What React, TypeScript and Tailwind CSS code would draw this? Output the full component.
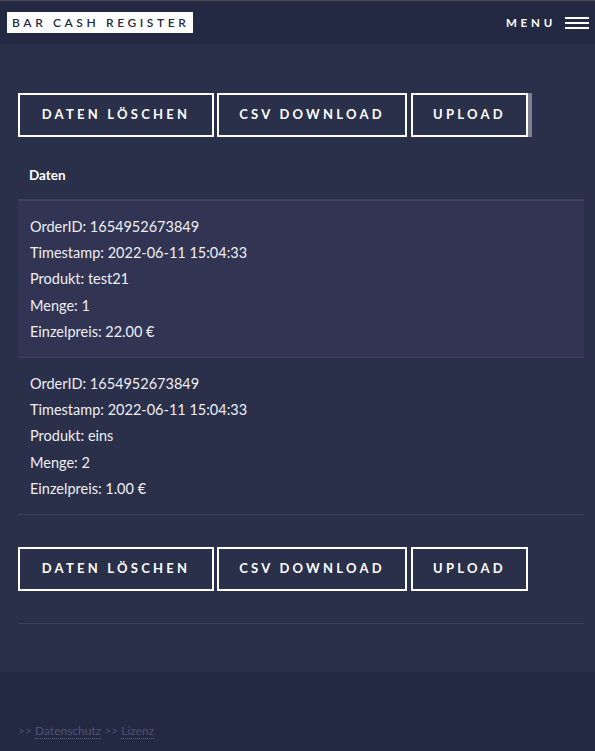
import React from "react";

const rows = [
  { id: "1654952673849", ts: "2022-06-11 15:04:33", p: "test21", m: "1", e: "22.00 €" },
  { id: "1654952673849", ts: "2022-06-11 15:04:33", p: "eins", m: "2", e: "1.00 €" },
];

function Buttons({ bar }: { bar?: boolean }) {
  const cls =
    "h-[44px] border-2 border-white flex items-center justify-center text-white text-[13px] font-bold tracking-[0.25em] uppercase";
  return (
    <div className="flex">
      <div className={cls + " w-[196px]"}>Daten Löschen</div>
      <div className={cls + " w-[190px] ml-[3px]"}>CSV Download</div>
      <div className={cls + " w-[117px] ml-[4px]"}>Upload</div>
      {bar && <div className="w-[4px] h-[44px] bg-[#7d7f8c]" />}
    </div>
  );
}

export default function App() {
  return (
    <div className="w-[595px] min-h-[751px] bg-[#2a2f4a] font-['Lato',sans-serif] flex flex-col">
      <div className="h-[1px] bg-[#4a4a4c]" />
      <header className="h-[43px] bg-[#242943] flex items-center justify-between pl-[7px] pr-[6px]">
        <div className="bg-white h-[21px] w-[186px] flex items-center pl-[5px] text-[#242943] text-[12px] font-semibold tracking-[0.3em] whitespace-nowrap overflow-hidden">
          BAR CASH REGISTER
        </div>
        <div className="flex items-center">
          <span className="text-white text-[11.5px] font-bold tracking-[0.33em]">MENU</span>
          <div className="ml-[9px] w-[24px] flex flex-col gap-[3px]">
            <div className="h-[2px] bg-white" />
            <div className="h-[2px] bg-white" />
            <div className="h-[2px] bg-white" />
          </div>
        </div>
      </header>
      <main className="pl-[18px] pr-[11px] pt-[49px] pb-[48px]">
        <Buttons bar />
        <div className="pt-[30px] pb-[16px] pl-[11px] leading-[16px] text-[13.5px] font-bold text-white border-b-2 border-[#3d415f]">
          Daten
        </div>
        {rows.map((r, i) => (
          <div
            key={i}
            className={
              "pt-[12.5px] pb-[11.5px] pl-[12px] text-[14.5px] leading-[26.4px] text-[#eeeef4] border-b border-[#3b3f5d] " +
              (i === 0 ? "bg-[#313553]" : "")
            }
          >
            <div>OrderID: {r.id}</div>
            <div>Timestamp: {r.ts}</div>
            <div>Produkt: {r.p}</div>
            <div>Menge: {r.m}</div>
            <div>Einzelpreis: {r.e}</div>
          </div>
        ))}
        <div className="mt-[32px]">
          <Buttons />
        </div>
        <div className="mt-[32px] h-[1px] bg-[#3b3f5d]" />
      </main>
      <footer className="flex-1 bg-[#242943] pl-[18px] pt-[50px] pb-[12px] text-[12px] text-[#474c6b]">
        <span>&gt;&gt; </span>
        <span className="text-[#4c5170] border-b border-dotted border-[#5a5f7e]">Datenschutz</span>
        <span> &gt;&gt; </span>
        <span className="text-[#4c5170] border-b border-dotted border-[#5a5f7e]">Lizenz</span>
      </footer>
    </div>
  );
}
